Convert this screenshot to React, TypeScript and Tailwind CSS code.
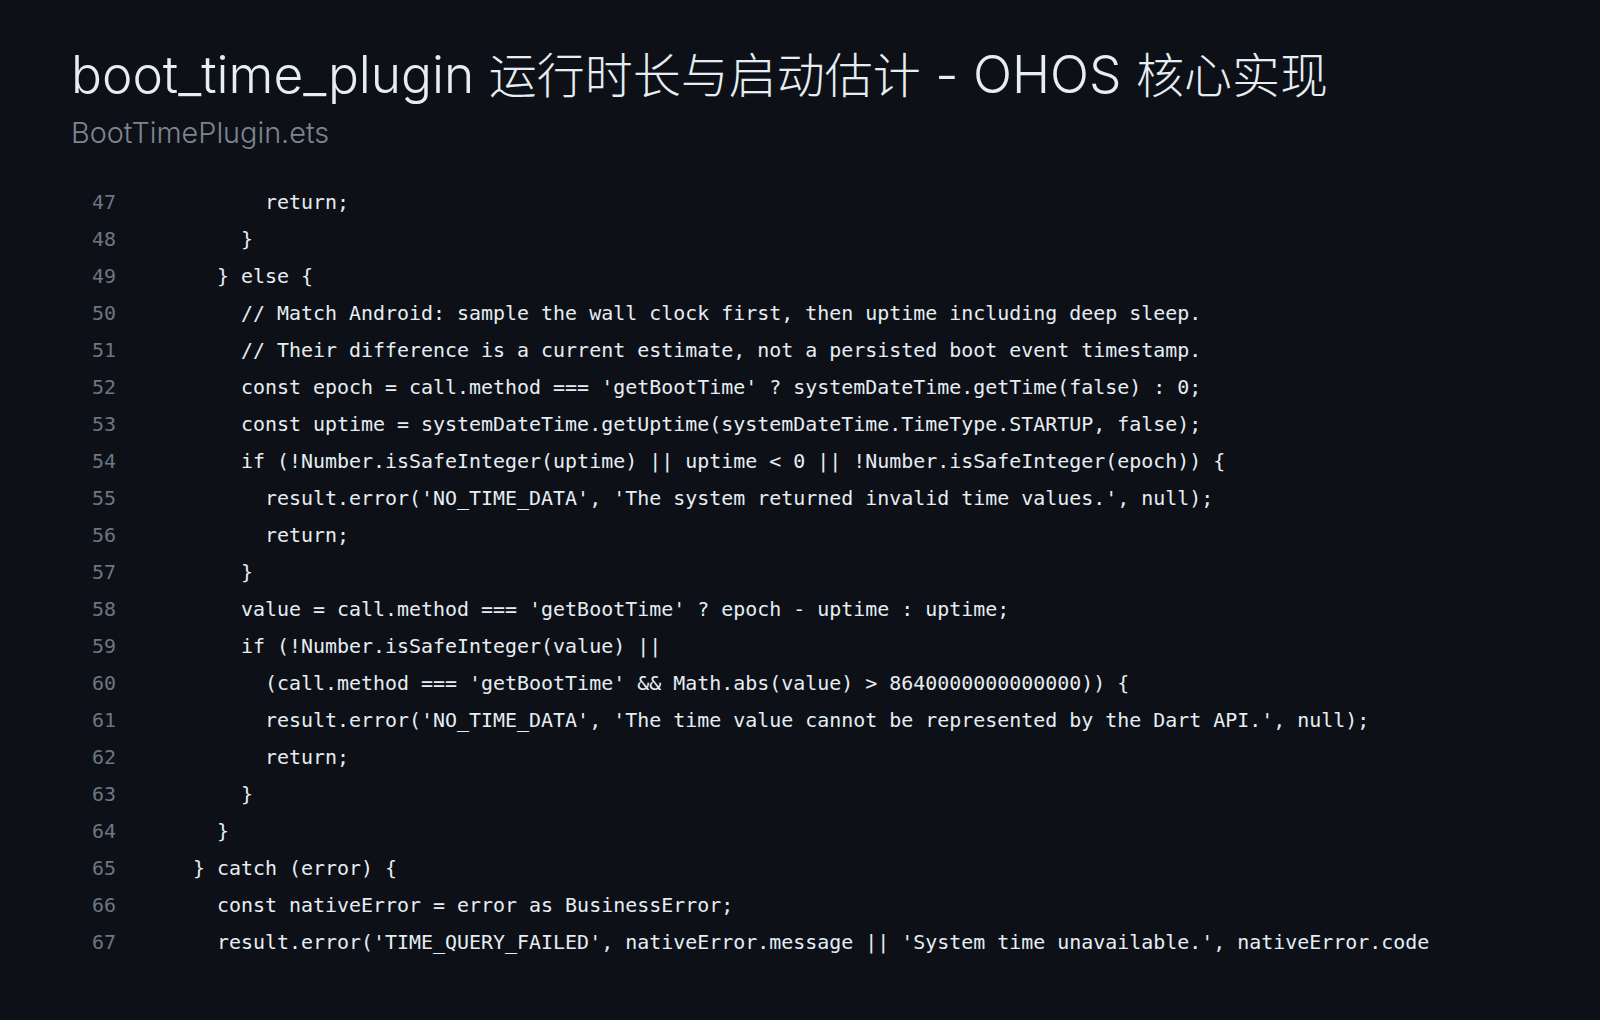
import React from 'react';

const lines: string[] = [
  "          return;",
  "        }",
  "      } else {",
  "        // Match Android: sample the wall clock first, then uptime including deep sleep.",
  "        // Their difference is a current estimate, not a persisted boot event timestamp.",
  "        const epoch = call.method === 'getBootTime' ? systemDateTime.getTime(false) : 0;",
  "        const uptime = systemDateTime.getUptime(systemDateTime.TimeType.STARTUP, false);",
  "        if (!Number.isSafeInteger(uptime) || uptime < 0 || !Number.isSafeInteger(epoch)) {",
  "          result.error('NO_TIME_DATA', 'The system returned invalid time values.', null);",
  "          return;",
  "        }",
  "        value = call.method === 'getBootTime' ? epoch - uptime : uptime;",
  "        if (!Number.isSafeInteger(value) ||",
  "          (call.method === 'getBootTime' && Math.abs(value) > 8640000000000000)) {",
  "          result.error('NO_TIME_DATA', 'The time value cannot be represented by the Dart API.', null);",
  "          return;",
  "        }",
  "      }",
  "    } catch (error) {",
  "      const nativeError = error as BusinessError;",
  "      result.error('TIME_QUERY_FAILED', nativeError.message || 'System time unavailable.', nativeError.code",
];

export default function App() {
  return (
    <div className="min-h-screen w-full bg-[#0d1117] overflow-hidden">
      <header className="pl-[71px] pr-10 pt-[45px] font-['Inter','Noto_Sans_CJK_SC',sans-serif]">
        <h1 className="text-[51.4px] leading-[58px] font-light text-[#e6edf3] whitespace-nowrap">
          boot_time_plugin <span className="text-[48px]">运行时长与启动估计</span> - OHOS{' '}
          <span className="text-[48px]">核心实现</span>
        </h1>
        <div className="mt-[11px] text-[28.8px] leading-[34px] font-light text-[#7d8590]">
          BootTimePlugin.ets
        </div>
      </header>
      <div className="mt-[34px] pl-[92px] text-[19.95px] leading-[37px] font-['DejaVu_Sans_Mono',monospace]">
        {lines.map((l, i) => (
          <div key={i} className="flex whitespace-pre">
            <span className="w-[24px] shrink-0 text-right text-[#6e7681]">{47 + i}</span>
            <span className="ml-[29px] text-[#e6edf3]">{l}</span>
          </div>
        ))}
      </div>
    </div>
  );
}
